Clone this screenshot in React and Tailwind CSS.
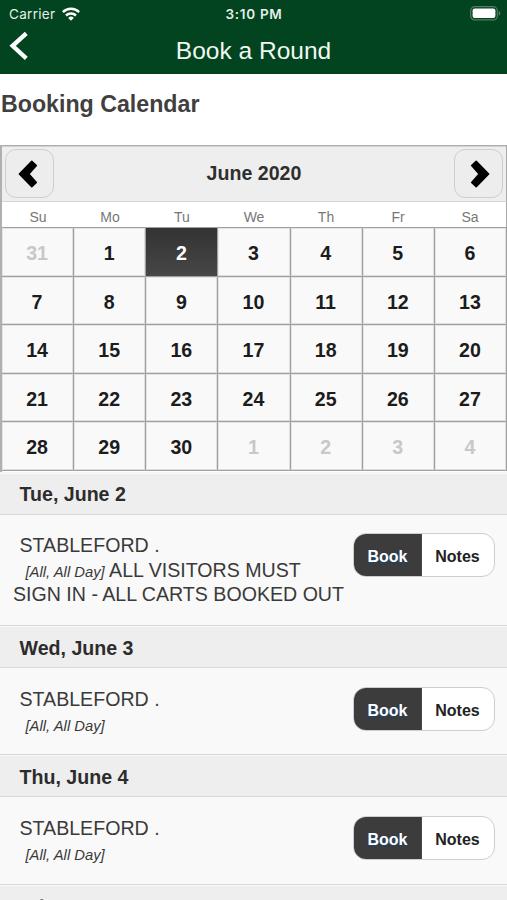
import clsx from "clsx";

const weekdays = ["Su", "Mo", "Tu", "We", "Th", "Fr", "Sa"];

const weeks = [
  [31, 1, 2, 3, 4, 5, 6],
  [7, 8, 9, 10, 11, 12, 13],
  [14, 15, 16, 17, 18, 19, 20],
  [21, 22, 23, 24, 25, 26, 27],
  [28, 29, 30, 1, 2, 3, 4],
];

const selectedDay = 2;

const days = [
  {
    title: "Tue, June 2",
    name: "STABLEFORD .",
    when: "[All, All Day]",
    note: ["ALL VISITORS MUST", "SIGN IN - ALL CARTS BOOKED OUT"],
  },
  { title: "Wed, June 3", name: "STABLEFORD .", when: "[All, All Day]" },
  { title: "Thu, June 4", name: "STABLEFORD .", when: "[All, All Day]" },
];

function StatusBar() {
  return (
    <div className="flex h-[27px] items-center px-[9px] font-['Inter',sans-serif] text-[#e6efe8]">
      <div className="flex flex-1 items-center gap-[7px] text-[13.5px]">
        <span className="pt-px tracking-[0.3px]">Carrier</span>
        <svg width="18" height="14" viewBox="0 0 18 14" fill="none" stroke="#fff" strokeWidth="2.5">
          <path d="M0.9 5.1a11.6 11.6 0 0 1 16.2 0" />
          <path d="M4 8.5a7.2 7.2 0 0 1 10 0" />
          <path d="M9 13.8 6.2 10.9a4 4 0 0 1 5.6 0Z" fill="#fff" stroke="none" />
        </svg>
      </div>
      <div className="pl-px pt-px text-[13.5px] font-semibold tracking-[0.7px]">3:10 PM</div>
      <div className="flex flex-1 justify-end">
        <svg className="-mr-[3px]" width="31" height="15" viewBox="0 0 31 15">
          <rect x="0.7" y="0.7" width="26.6" height="13.2" rx="4" fill="none" stroke="#557d62" strokeWidth="1.2" />
          <rect x="2.6" y="2.6" width="22.8" height="9.4" rx="2" fill="#fff" />
          <path d="M28.6 5v4.6c1.2-.4 1.8-1.3 1.8-2.3s-.6-1.9-1.8-2.3Z" fill="#557d62" />
        </svg>
      </div>
    </div>
  );
}

function TopBar() {
  return (
    <header className="h-[74px] bg-[#01441f]">
      <StatusBar />
      <div className="flex h-[47px] items-start">
        <button className="w-[60px] pl-[9px] pt-[4px]">
          <svg width="20" height="30" viewBox="0 0 20 30" fill="none" stroke="#fff" strokeWidth="4.3">
            <path d="M17.3 2.3 3.6 14.8 17.3 27.4" />
          </svg>
        </button>
        <h1 className="flex-1 pr-[60px] pt-[6px] text-center text-[24.5px] leading-9 text-[#f1f8f2]">
          Book a Round
        </h1>
      </div>
    </header>
  );
}

function NavButton({ next }) {
  return (
    <button className="flex size-[49px] items-center justify-center rounded-[11px] border border-[#cfcfcf] bg-[#ededed]">
      <svg
        className={clsx(next ? "ml-[2px] -scale-x-100" : "-ml-[2px]")}
        width="20"
        height="28"
        viewBox="0 0 20 28"
        fill="#000"
        stroke="#000"
        strokeWidth="1.6"
        strokeLinejoin="round"
      >
        <path d="M13.8 1.3 18.3 5.5 10.800 14 18.3 22.500 13.800 26.700 1.400 14Z" />
      </svg>
    </button>
  );
}

function Calendar() {
  return (
    <section className="h-[327px] border-l-2 border-t border-l-[#b0b0b0] border-t-[#adadad]">
      <div className="flex h-[55px] items-center justify-between border-r border-[#a8a8a8] bg-[#eee] pl-[2.5px] pr-[2.5px] shadow-[inset_0_1px_0_#d2d2d2]">
        <NavButton />
        <h3 className="text-[19.6px] font-bold text-[#2e2e2e]">June 2020</h3>
        <NavButton next />
      </div>
      <div className="grid h-[26px] grid-cols-7 border-r border-t border-r-[#a8a8a8] border-t-[#d6d6d6] bg-white">
        {weekdays.map((d) => (
          <div key={d} className="pt-[5px] text-center text-[14px] leading-5 text-[#777]">
            {d}
          </div>
        ))}
      </div>
      <div className="grid h-[244px] grid-cols-7 grid-rows-5 border-t border-[#a0a0a0]">
        {weeks.map((week, w) =>
          week.map((day, i) => {
            const outside = (w === 0 && day > 7) || (w === 4 && day < 8);
            const selected = w === 0 && day === selectedDay;
            return (
              <div
                key={w + "-" + i}
                className={clsx(
                  "flex items-center justify-center border-b border-r border-[#a0a0a0] pr-px pt-[4px] text-[19.6px] font-bold",
                  selected
                    ? "bg-linear-to-b from-[#333] to-[#474747] text-white"
                    : "bg-[#f9f9f9] shadow-[inset_-1px_-1px_0_#dedede,inset_1px_1px_0_#e4e4e4]",
                  outside && "text-[#c8c8c8]",
                  !outside && !selected && "text-[#1c1c1c]"
                )}
              >
                {day}
              </div>
            );
          })
        )}
      </div>
    </section>
  );
}

function BookingActions() {
  return (
    <div className="flex h-11 w-[142px] shrink-0 overflow-hidden rounded-[13px] border border-[#cecece] bg-white text-[16px] font-bold">
      <button className="-my-px -ml-px w-[69px] border border-[#4a4a4a] bg-[#3c3c3c] pl-px pt-[3px] text-white [text-shadow:0_1px_2px_#15457c]">
        Book
      </button>
      <button className="flex-1 pt-[3px] text-[#222]">Notes</button>
    </div>
  );
}

function DayHeader({ title, first }) {
  return (
    <h4
      className={clsx(
        "h-[43px] border-y border-[#d8d8d8] bg-[#eee] pl-[19.5px] text-[19.6px] font-bold leading-[38px] text-[#2c2c2c] shadow-[inset_0_1px_0_#f9f9f9]",
        first ? "border-t-[#f4f4f4] pt-[2px]" : "pt-[3px]"
      )}
    >
      {title}
    </h4>
  );
}

function DayEntry({ entry }) {
  return (
    <div
      className={clsx(
        "flex bg-[#f9f9f9] pr-[12.5px] text-[#3a3a3a]",
        entry.note ? "h-[110px] pt-[18px]" : "h-[86.4px] pt-[19px]"
      )}
    >
      <div className="flex-1 whitespace-nowrap pl-[13px] text-[19.6px] leading-[24.5px]">
        <p className="pl-[6.5px]">{entry.name}</p>
        <p className="pl-[12.5px]">
          <em className="text-[14.8px] leading-none">{entry.when}</em>
          {entry.note && " " + entry.note[0]}
        </p>
        {entry.note && <p>{entry.note[1]}</p>}
      </div>
      <BookingActions />
    </div>
  );
}

export default function App() {
  return (
    <div className="h-[900px] w-[507px] overflow-hidden bg-white font-['Liberation_Sans',Arial,sans-serif]">
      <TopBar />
      <h2 className="h-[71px] pl-px pt-[12px] text-[23.2px] font-bold leading-9 text-[#404040]">
        Booking Calendar
      </h2>
      <Calendar />
      <main>
        {days.map((entry, i) => (
          <div key={entry.title}>
            <DayHeader title={entry.title} first={i === 0} />
            <DayEntry entry={entry} />
          </div>
        ))}
        <div className="h-[17px] overflow-hidden border-t border-[#d8d8d8] bg-[#eee] pl-[19.5px] pt-[3px] text-[19.6px] font-bold leading-[38px] text-[#7c7c7c] shadow-[inset_0_1px_0_#f9f9f9]">
          Fri, June 5
        </div>
      </main>
    </div>
  );
}
